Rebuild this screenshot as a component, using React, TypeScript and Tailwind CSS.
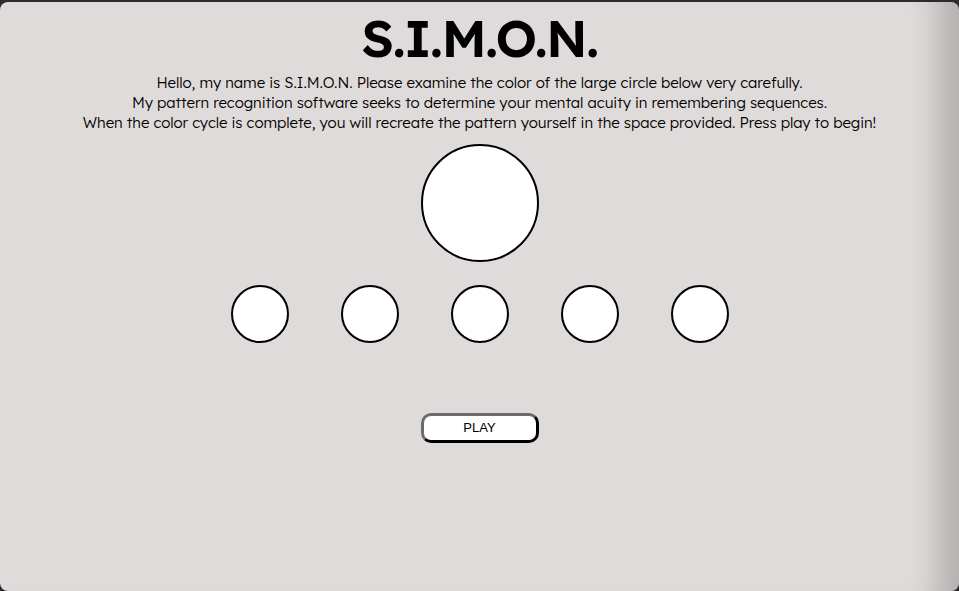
export default function App() {
  const small = [0, 1, 2, 3, 4];
  return (
    <div className="min-h-screen w-full bg-[#2b2b2b] pt-[2px]">
      <div
        className="h-[589px] rounded-[8px] bg-[#e0dbdb] shadow-[inset_-45px_0_30px_-25px_rgba(0,0,0,0.2)] flex flex-col items-center text-black"
        style={{ fontFamily: "Lexend, Inter, 'Noto Sans', sans-serif" }}
      >
        <h1 className="mt-[4px] text-[52px] leading-[64px] font-semibold tracking-[-1.5px]">S.I.M.O.N.</h1>
        <div className="mt-[3px] text-center text-[15px] leading-[20px] font-light tracking-[-0.05px]">
          <p>Hello, my name is S.I.M.O.N. Please examine the color of the large circle below very carefully.</p>
          <p>My pattern recognition software seeks to determine your mental acuity in remembering sequences.</p>
          <p>When the color cycle is complete, you will recreate the pattern yourself in the space provided. Press play to begin!</p>
        </div>
        <div className="mt-[11px] w-[118px] h-[118px] rounded-full bg-white border-2 border-black" />
        <div className="mt-[23px] flex gap-[52px]">
          {small.map((i) => (
            <div key={i} className="w-[58px] h-[58px] rounded-full bg-white border-2 border-black" />
          ))}
        </div>
        <button
          className="mt-[70px] w-[118px] h-[30px] rounded-[10px] bg-white border-[3px] border-t-[#6b6b6b] border-l-[#6b6b6b] border-r-black border-b-black text-[13px] text-black"
          style={{ fontFamily: "Arial, 'Liberation Sans', sans-serif" }}
        >
          PLAY
        </button>
      </div>
    </div>
  );
}
